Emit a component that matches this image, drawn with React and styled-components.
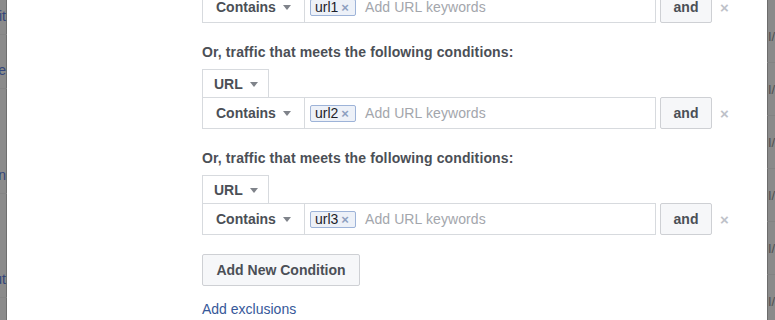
import styled, { createGlobalStyle } from "styled-components";

const GlobalStyle = createGlobalStyle`
  html, body {
    margin: 0;
    padding: 0;
    height: 100%;
    overflow: hidden;
    background: #8a8a8a;
  }
  #root {
    height: 100%;
  }
`;

const conditions = ["url1", "url2", "url3"];

function Caret() {
    return <CaretShape />;
}

function ConditionRow({ tag }) {
    return (
        <RowLine>
            <RowBox>
                <Select $width={102}>
                    Contains <Caret />
                </Select>
                <KeywordInput>
                    <Tag>
                        {tag}
                        <TagX>×</TagX>
                    </Tag>
                    <Placeholder>Add URL keywords</Placeholder>
                </KeywordInput>
            </RowBox>
            <AndButton>and</AndButton>
            <RemoveX>×</RemoveX>
        </RowLine>
    );
}

function App() {
    // rows of the page behind the dialog, only their last letters show
    const leftRows = [
        { h: 35, text: "Edit" },
        { h: 54, text: "Page" },
        { h: 105, text: "Conversion" },
        { h: 104, text: "Edit Layout" },
        { h: 40, text: "" },
    ];
    const rightRows = ["I/A", "I/A", "I/A", "I/A", "I/A", "I/A"];

    return (
        <>
            <GlobalStyle />
            <Page>
                <LeftStrip>
                    {leftRows.map((r, i) => (
                        <LeftRow key={i} $h={r.h}>
                            <span>{r.text}</span>
                        </LeftRow>
                    ))}
                </LeftStrip>

                <Modal>
                    <Content>
                        <ConditionRow tag={conditions[0]} />

                        {conditions.slice(1).map((c) => (
                            <Group key={c}>
                                <Heading>Or, traffic that meets the following conditions:</Heading>
                                <UrlSelect>
                                    URL <Caret />
                                </UrlSelect>
                                <ConditionRow tag={c} />
                            </Group>
                        ))}

                        <AddButton>Add New Condition</AddButton>
                        <LinkText href="#">Add exclusions</LinkText>
                    </Content>
                </Modal>

                <RightStrip>
                    {rightRows.map((t, i) => (
                        <RightRow key={i}>{t}</RightRow>
                    ))}
                </RightStrip>
            </Page>
        </>
    );
}
export default App;

const Page = styled.div`
display: flex;
width: 775px;
height: 320px;
font-family: "Liberation Sans", Helvetica, Arial, sans-serif;
font-size: 14px;
color: #4b4f56;
`

const LeftStrip = styled.div`
width: 7px;
flex-shrink: 0;
background: #8b8b8b;
overflow: hidden;
display: flex;
flex-direction: column;
box-shadow: inset -1px 0 0 #6f6f6f;
`

const LeftRow = styled.div`
height: ${props => props.$h}px;
flex-shrink: 0;
display: flex;
justify-content: flex-end;
align-items: flex-end;
white-space: nowrap;
color: #33457a;
font-size: 14px;
line-height: 16px;
border-bottom: 1px solid #858585;
box-sizing: border-box;
padding-right: 1px;

    span {
        margin-bottom: 10px;
    }
`

const RightStrip = styled.div`
width: 8px;
flex-shrink: 0;
background: #8a8a8a;
overflow: hidden;
display: flex;
flex-direction: column;
padding-top: 10px;
box-shadow: inset 1px 0 0 #6c6c6c;
`

const RightRow = styled.div`
height: 53px;
flex-shrink: 0;
display: flex;
align-items: center;
padding-left: 1px;
white-space: nowrap;
color: #505050;
font-size: 13px;
box-sizing: border-box;
border-bottom: 1px solid #838383;
`

const Modal = styled.div`
flex: 1;
background: #ffffff;
padding-left: 195px;
overflow: hidden;
`

const Content = styled.div`
display: flex;
flex-direction: column;
align-items: flex-start;
margin-top: -9px;
`

const Group = styled.div`
display: flex;
flex-direction: column;
align-items: flex-start;
`

const Heading = styled.div`
margin-top: 21px;
margin-bottom: 9px;
font-weight: bold;
line-height: 16px;
letter-spacing: 0.12px;
color: #4b4f56;
`

const UrlSelect = styled.div`
display: flex;
align-items: center;
box-sizing: border-box;
width: 67px;
height: 28px;
padding-left: 11px;
border: 1px solid #d7dade;
border-bottom: none;
font-weight: bold;
background: #fff;
`

const RowLine = styled.div`
display: flex;
align-items: center;
height: 32px;
`

const RowBox = styled.div`
display: flex;
box-sizing: border-box;
width: 454px;
height: 32px;
border: 1px solid #d7dade;
background: #fff;
`

const Select = styled.div`
display: flex;
align-items: center;
width: ${props => props.$width}px;
padding-left: 13px;
box-sizing: border-box;
border-right: 1px solid #d7dade;
font-weight: bold;
flex-shrink: 0;
`

const CaretShape = styled.span`
display: inline-block;
width: 0;
height: 0;
margin-left: 7px;
margin-top: 1px;
border-left: 4.5px solid transparent;
border-right: 4.5px solid transparent;
border-top: 5px solid #7f838a;
`

const KeywordInput = styled.div`
flex: 1;
display: flex;
align-items: center;
padding-left: 5px;
`

const Tag = styled.span`
display: inline-flex;
align-items: center;
box-sizing: border-box;
height: 17px;
padding: 0 6px 0 4px;
border: 1px solid #9db3d8;
border-radius: 2px;
background: #edf1f8;
color: #1d2129;
line-height: 15px;
`

const TagX = styled.span`
margin-left: 3px;
color: #8d9fc0;
font-size: 13px;
font-weight: bold;
`

const Placeholder = styled.span`
margin-left: 9px;
color: #a3a6ac;
letter-spacing: 0.1px;
`

const AndButton = styled.button`
box-sizing: border-box;
width: 52px;
height: 32px;
margin-left: 4px;
border: 1px solid #ced0d4;
border-radius: 2px;
background: #f6f7f9;
color: #4b4f56;
font-family: inherit;
font-size: 14px;
font-weight: bold;
padding: 0;
`

const RemoveX = styled.span`
margin-left: 8px;
color: #bec2c9;
font-size: 15px;
font-weight: bold;
`

const AddButton = styled.button`
margin-top: 19px;
box-sizing: border-box;
width: 158px;
height: 32px;
border: 1px solid #ced0d4;
border-radius: 2px;
background: #f6f7f9;
color: #4b4f56;
font-family: inherit;
font-size: 14px;
font-weight: bold;
padding: 0;
`

const LinkText = styled.a`
margin-top: 15px;
line-height: 16px;
color: #365899;
text-decoration: none;
`
